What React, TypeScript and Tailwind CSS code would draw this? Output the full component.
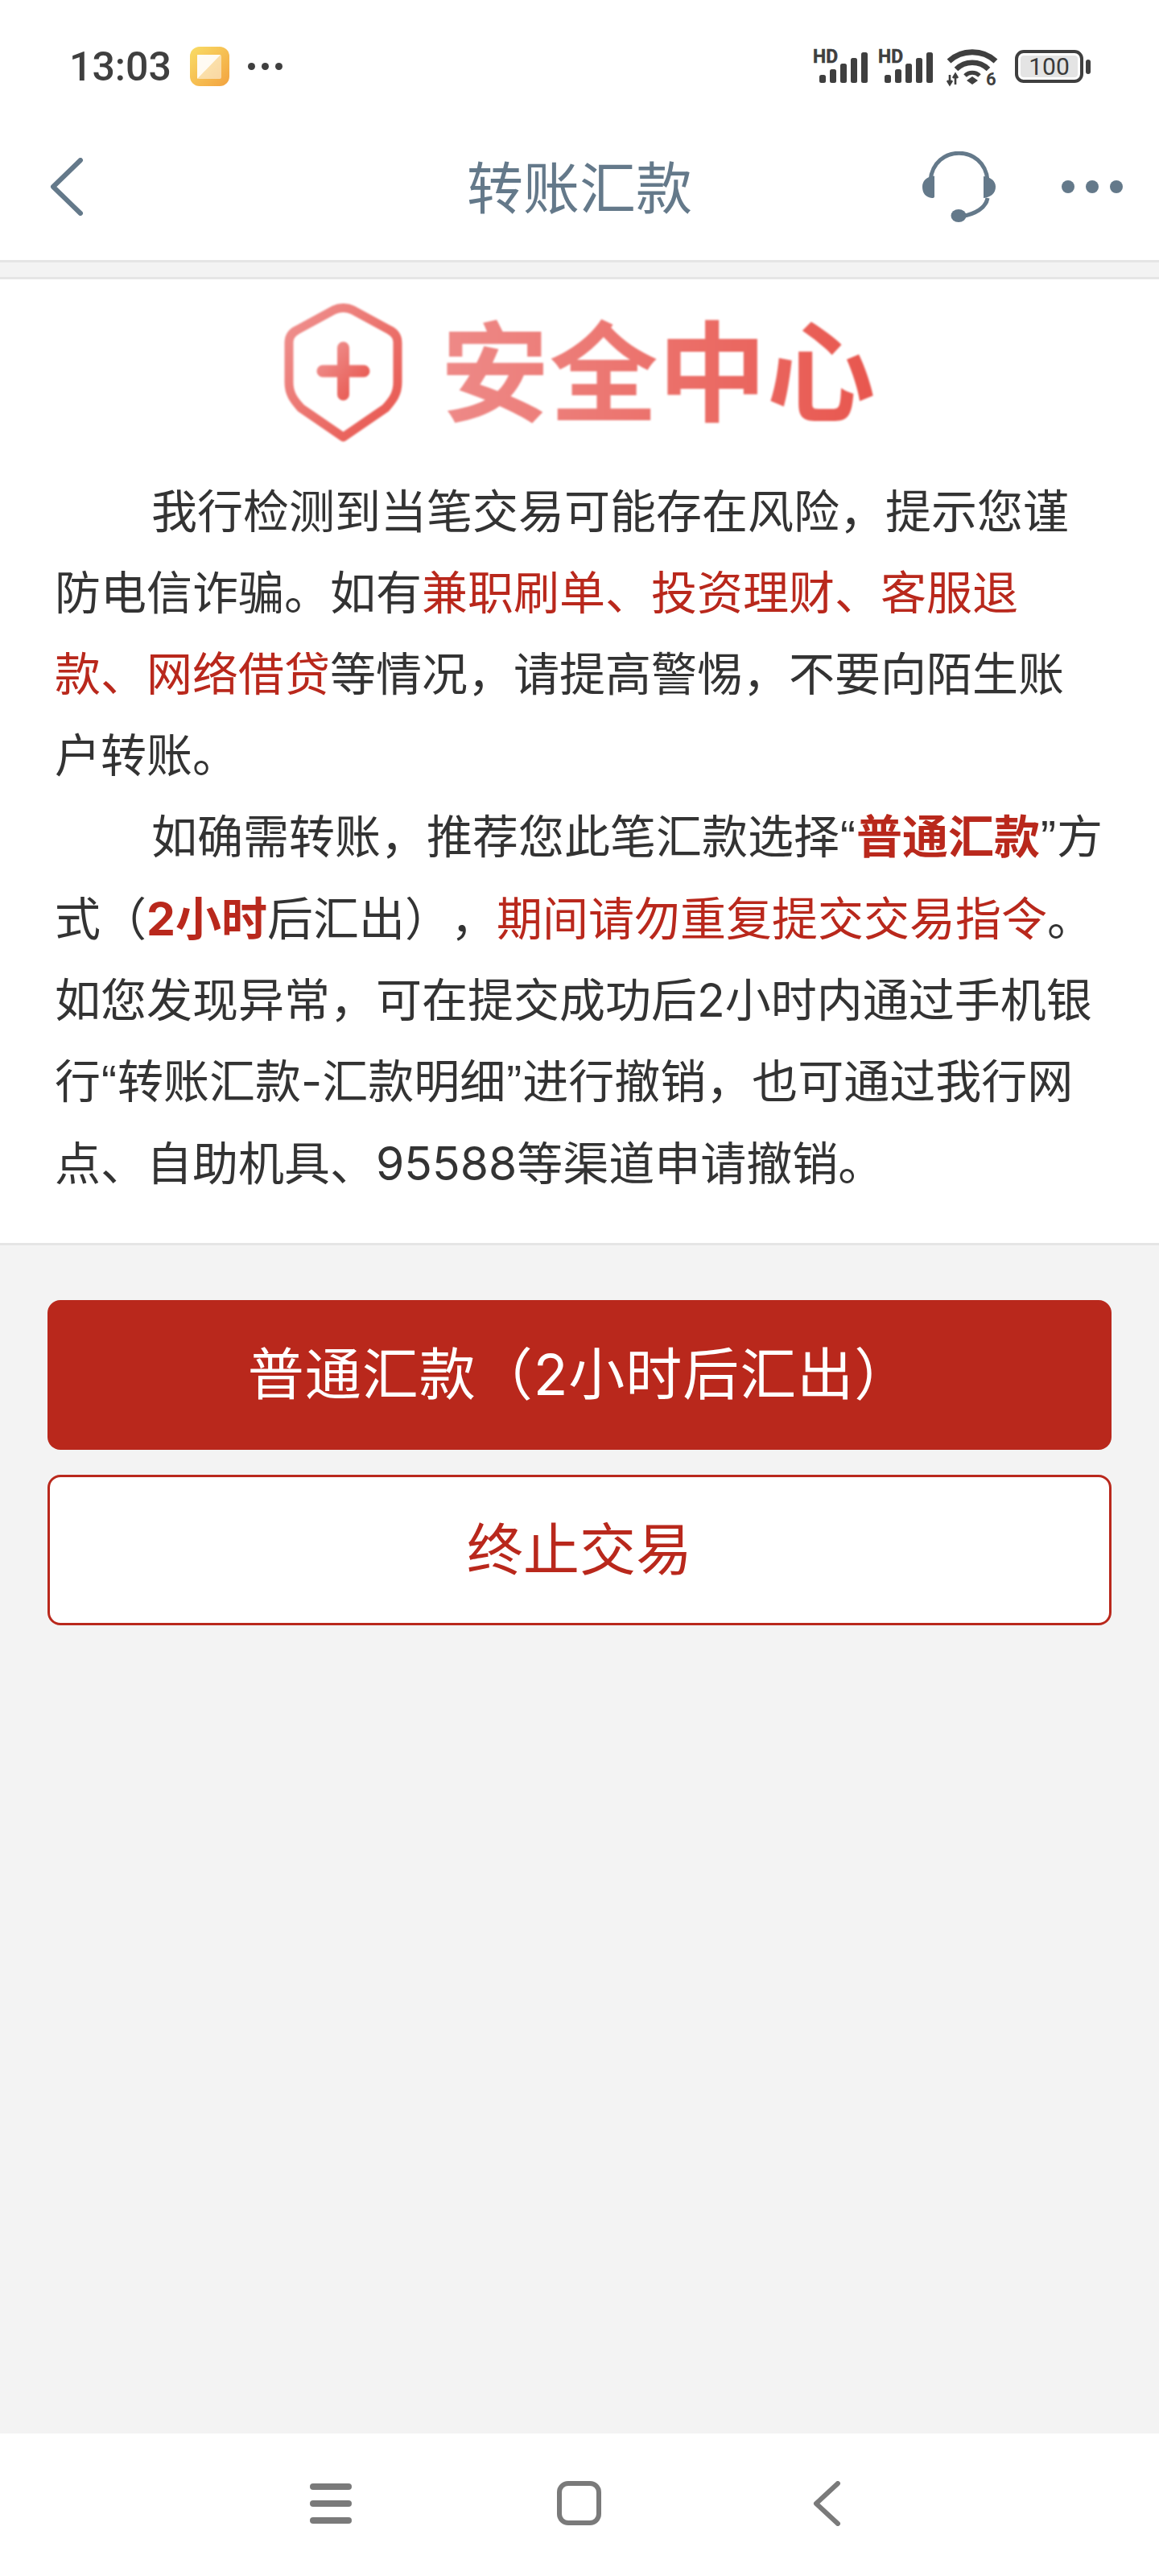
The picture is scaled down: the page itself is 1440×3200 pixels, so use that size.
import React from "react";

const Red = ({ children, bold }: { children: React.ReactNode; bold?: boolean }) => (
  <span className={bold ? "font-bold text-[#b9281c]" : "text-[#b9281c]"}>{children}</span>
);

const Quote = ({ children }: { children: React.ReactNode }) => (
  <span className="px-[1px] font-['Liberation_Sans',sans-serif]">{children}</span>
);

const Signal = () => (
  <svg width="69" height="44" viewBox="0 0 69 44" fill="#3f3f3f" className="overflow-visible">
    <text x="0" y="17" fontSize="23" fontWeight="700" fontFamily="Roboto, sans-serif" stroke="#3f3f3f" strokeWidth="0.5" textLength="31" lengthAdjust="spacingAndGlyphs">HD</text>
    <rect x="8" y="32" width="8" height="10" rx="2.500" />
    <rect x="21" y="25" width="8" height="17" rx="2.500" />
    <rect x="34" y="18" width="8" height="24" rx="2.500" />
    <rect x="47" y="11" width="8" height="31" rx="2.500" />
    <rect x="60" y="4" width="8" height="38" rx="2.500" />
  </svg>
);

const Wifi = () => (
  <svg width="64" height="50" viewBox="0 0 64 50" fill="none" stroke="#3f3f3f" className="overflow-visible">
    <path d="M3 18 C19 3 45 3 61 18" strokeWidth="7" />
    <path d="M12 28 C23 17 41 17 52 28" strokeWidth="6.500" />
    <path d="M23 36 C28 31 36 31 41 36" strokeWidth="5" />
    <path d="M32 37 L39 42 L32 47 L25 42 Z" fill="#3f3f3f" stroke="none" />
    <path d="M4 35 V46 M1 42 L4 47 L7 42 M11 47 V35 M8 39 L11 34 L14 39" strokeWidth="2.600" />
    <text x="49" y="48" fill="#3f3f3f" stroke="none" fontSize="22" fontWeight="700" fontFamily="Roboto, sans-serif">6</text>
  </svg>
);

const Battery = () => (
  <div className="flex items-center">
    <div className="flex h-[41px] w-[85px] items-center justify-center rounded-[11px] border-[4px] border-[#3f3f3f] bg-white p-[3px]">
      <div className="flex h-full w-full items-center justify-center rounded-[4px] bg-[#e4e4e4] font-['Roboto',sans-serif] text-[30px] leading-none font-normal text-[#3a3a3a]">
        100
      </div>
    </div>
    <div className="ml-[3px] h-[18px] w-[6px] rounded-[3px] bg-[#3f3f3f]" />
  </div>
);

const Headset = () => (
  <svg width="91" height="88" viewBox="0 0 91 88" fill="none">
    <path d="M10 36 C14 -9 77 -9 81 36" stroke="#64798a" strokeWidth="5" />
    <path d="M15 31 V56 Q15 58 12 58 C4 57 0 52 0 44 C0 37 5 32 12 31 Q15 30 15 31Z" fill="#64798a" />
    <path d="M76 31 V58 C85 57 91 52 91 44 C91 37 85 32 76 31Z" fill="#64798a" />
    <path d="M81 58 C79 70 66 78 48 81" stroke="#64798a" strokeWidth="5" />
    <ellipse cx="45" cy="80" rx="9.500" ry="8" fill="#64798a" />
  </svg>
);

const Logo = () => (
  <div className="flex items-center justify-center">
    <svg width="147" height="173" viewBox="0 0 147 173" fill="none" className="blur-[0.8px]">
      <defs>
        <linearGradient id="sg" x1="0" y1="0" x2="1" y2="1">
          <stop offset="0" stopColor="#ef9290" />
          <stop offset="1" stopColor="#e8554d" />
        </linearGradient>
      </defs>
      <path
        d="M62 8 Q73.500 3 85 8 L131 33 Q141 38 141 49 V98 C141 112 135 120 126 130 L73.500 166 L21 130 C12 120 6 112 6 98 V49 Q6 38 16 33 Z"
        stroke="url(#sg)"
        strokeWidth="11"
        strokeLinejoin="round"
      />
      <path d="M73.500 55 V113 M48 84 H99" stroke="url(#sg)" strokeWidth="15" strokeLinecap="round" />
    </svg>
    <div className="ml-[48px] bg-gradient-to-r from-[#ee8a88] to-[#e8564e] bg-clip-text text-[135px] leading-[150px] font-bold text-transparent blur-[0.8px]">
      安全中心
    </div>
  </div>
);

export default function App() {
  return (
    <div className="flex h-[3200px] w-[1440px] flex-col overflow-hidden bg-[#f3f3f3] font-['Inter','Noto_Sans_CJK_SC',sans-serif]">
      <header className="h-[323px] bg-white">
        <div className="flex h-[165px] items-center justify-between pr-[85px] pl-[86px]">
          <div className="flex items-center">
            <span className="font-['Roboto',sans-serif] text-[50px] leading-none font-medium text-[#3f3f3f]">13:03</span>
            <div className="ml-[23px] flex h-[49px] w-[49px] items-center justify-center rounded-[12px] bg-gradient-to-br from-[#f8dd66] to-[#f2a23f]">
              <svg width="30" height="30" viewBox="0 0 30 30">
                <rect width="30" height="30" rx="2" fill="#fff" fillOpacity="0.5" />
                <path d="M0 0 H29 L0 30 Z" fill="#fff" fillOpacity="0.85" />
              </svg>
            </div>
            <div className="ml-[23px] flex gap-[8px]">
              <span className="h-[9px] w-[9px] rounded-full bg-[#3f3f3f]" />
              <span className="h-[9px] w-[9px] rounded-full bg-[#3f3f3f]" />
              <span className="h-[9px] w-[9px] rounded-full bg-[#3f3f3f]" />
            </div>
          </div>
          <div className="flex items-center">
            <Signal />
            <div className="ml-[12px]">
              <Signal />
            </div>
            <div className="ml-[16px]">
              <Wifi />
            </div>
            <div className="ml-[21px]">
              <Battery />
            </div>
          </div>
        </div>
        <div className="grid h-[134px] grid-cols-[1fr_auto_1fr] items-center">
          <div className="pl-[62px]">
            <svg width="42" height="72" viewBox="0 0 42 72" fill="none" stroke="#64798a" strokeWidth="6" strokeLinecap="round" strokeLinejoin="round">
              <path d="M38 3 L4 36 L38 69" />
            </svg>
          </div>
          <h1 className="pt-[6px] text-[70px] leading-none font-normal text-[#64798a]">转账汇款</h1>
          <div className="flex items-center justify-end pr-[45px]">
            <Headset />
            <div className="ml-[82px] flex gap-[14px]">
              <span className="h-[16px] w-[16px] rounded-full bg-[#64798a]" />
              <span className="h-[16px] w-[16px] rounded-full bg-[#64798a]" />
              <span className="h-[16px] w-[16px] rounded-full bg-[#64798a]" />
            </div>
          </div>
        </div>
      </header>

      <div className="h-[24px] border-y-[3px] border-[#e5e5e5]" />

      <section className="border-b-[3px] border-[#e5e5e5] bg-white pt-[30px] pb-[48px]">
        <Logo />
        <div className="mt-[35px] pr-[64px] pl-[68px] text-[57px] leading-[101px] text-[#333333] [text-spacing-trim:space-all]">
          <p className="indent-[120px]">
            我行检测到当笔交易可能存在风险，提示您谨防电信诈骗。如有<Red>兼职刷单、投资理财、客服退款、网络借贷</Red>等情况，请提高警惕，不要向陌生账户转账。
          </p>
          <p className="indent-[120px]">
            如确需转账，推荐您此笔汇款选择<Quote>“</Quote><Red bold>普通汇款</Red><Quote>”</Quote>方式（<Red bold>2小时</Red>后汇出），<Red>期间请勿重复提交交易指令</Red>。如您发现异常，可在提交成功后2小时内通过手机银行<Quote>“</Quote>转账汇款-汇款明细<Quote>”</Quote>进行撤销，也可通过我行网点、自助机具、95588等渠道申请撤销。
          </p>
        </div>
      </section>

      <main className="flex flex-1 flex-col gap-[31px] px-[59px] pt-[68px]">
        <button className="h-[186px] rounded-[16px] bg-[#b9281c] text-[70px] leading-none tracking-[1px] text-white">
          普通汇款（2小时后汇出）
        </button>
        <button className="h-[187px] rounded-[16px] border-[3px] border-[#b9281c] bg-white text-[70px] leading-none text-[#b9281c]">
          终止交易
        </button>
      </main>

      <nav className="flex h-[177px] items-center bg-white pb-[4px] pl-[385px]">
        <div className="flex w-[52px] flex-col gap-[13px]">
          <span className="h-[8px] rounded-full bg-[#7a7a7a]" />
          <span className="h-[8px] rounded-full bg-[#7a7a7a]" />
          <span className="h-[8px] rounded-full bg-[#7a7a7a]" />
        </div>
        <div className="ml-[255px] h-[55px] w-[55px] rounded-[14px] border-[6px] border-[#7a7a7a]" />
        <svg className="ml-[262px]" width="36" height="56" viewBox="0 0 36 56" fill="none" stroke="#7a7a7a" strokeWidth="6" strokeLinecap="round" strokeLinejoin="round">
          <path d="M32 3 L5 28 L32 53" />
        </svg>
      </nav>
    </div>
  );
}
